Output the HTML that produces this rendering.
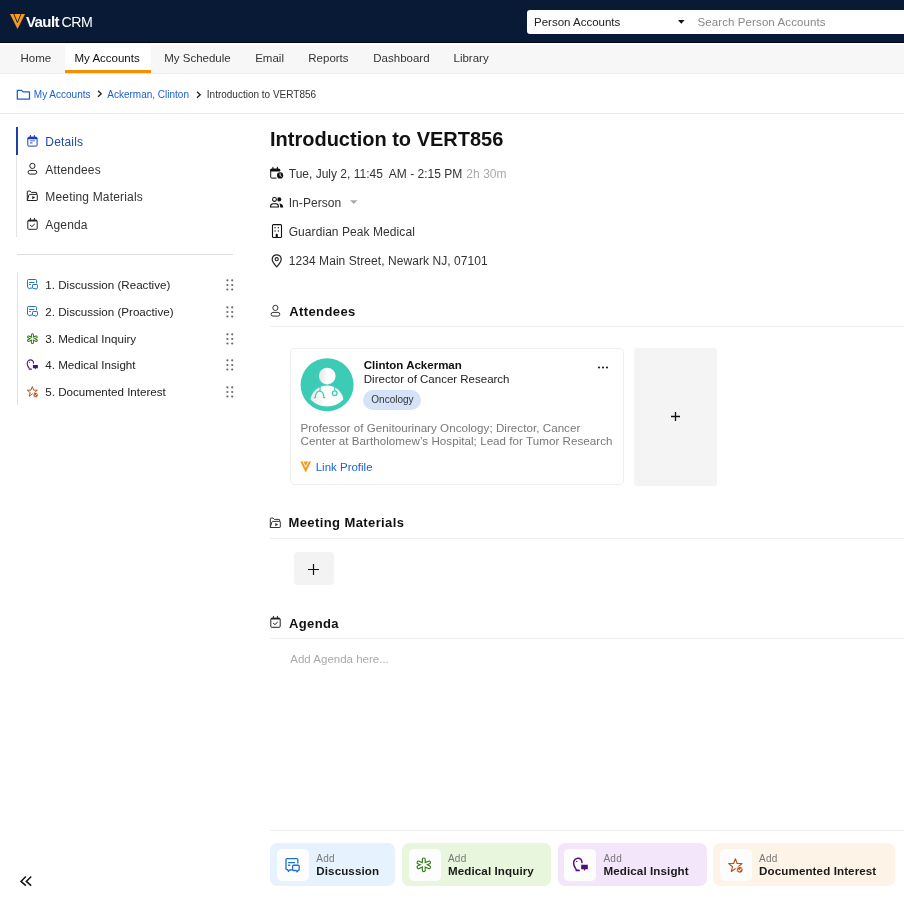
<!DOCTYPE html>
<html><head><meta charset="utf-8">
<style>
*{box-sizing:border-box;margin:0;padding:0}
html,body{width:904px;height:900px;overflow:hidden;background:#fff;font-family:"Liberation Sans",sans-serif;color:#222}
.abs{position:absolute}
svg.abs{overflow:visible}
.t{position:absolute;white-space:nowrap;line-height:1}
#hdr{position:absolute;left:0;top:0;width:904px;height:43px;background:#091a37;border-bottom:1px solid #020617}
#nav{position:absolute;left:0;top:43px;width:904px;height:31px;background:#f7f7f7;border-top:2px solid #fff;border-bottom:1px solid #ececec}
.tab{position:absolute;top:0;height:28px;font-size:11.5px;color:#333}
.tab span{position:absolute;top:7px}
#bc{position:absolute;left:0;top:113px;width:904px;height:1px;background:#ececec}
.side{font-size:12px;color:#333;letter-spacing:0.17px}
.side2{font-size:11.6px;color:#222}
.info{font-size:12px;color:#333;letter-spacing:0.07px}
.sec{font-size:13px;font-weight:bold;color:#111;letter-spacing:0.4px}
.sep{position:absolute;height:1px;background:#eeeeee}
</style></head><body><div id="root" style="position:absolute;left:0;top:0;width:904px;height:900px;will-change:transform;overflow:hidden">

<div id="hdr">
  <svg class="abs" style="left:9px;top:13px" width="17" height="17" viewBox="9 13 17 17">
    <path d="M10 14 L25 14 L17.5 29 Z" fill="#f69b1e"/>
    <path d="M13.8 14 L17.4 22.6 L21 14" fill="none" stroke="#091a37" stroke-width="0.9"/>
  </svg>
  <div class="t" style="left:26px;top:14px;font-size:15px;font-weight:bold;color:#fff;letter-spacing:-0.6px">Vault</div>
  <div class="t" style="left:61.5px;top:14.5px;font-size:14.2px;color:#fff;letter-spacing:-0.5px">CRM</div>
  <div class="abs" style="left:527px;top:9.8px;width:400px;height:24px;background:#fff;border-radius:3px"></div>
  <div class="t" style="left:534px;top:17px;font-size:11.5px;color:#222">Person Accounts</div>
  <svg class="abs" style="left:677.8px;top:20px" width="8" height="5"><path d="M0 0 H6.6 L3.3 3.8Z" fill="#111"/></svg>
  <div class="t" style="left:697.5px;top:17px;font-size:11.5px;color:#888;letter-spacing:0.1px">Search Person Accounts</div>
</div>

<div id="nav">
  <div class="tab" style="left:10px;width:51px"><span style="left:10.5px">Home</span></div>
  <div class="tab" style="left:65px;width:86px;background:#fff;color:#111;border-bottom:3px solid #f78e00"><span style="left:9.5px">My Accounts</span></div>
  <div class="tab" style="left:154.2px;width:86px"><span style="left:10px">My Schedule</span></div>
  <div class="tab" style="left:245.2px;width:86px"><span style="left:10px">Email</span></div>
  <div class="tab" style="left:298.3px;width:86px"><span style="left:10px">Reports</span></div>
  <div class="tab" style="left:363.3px;width:86px"><span style="left:10px">Dashboard</span></div>
  <div class="tab" style="left:443.5px;width:86px"><span style="left:10px">Library</span></div>
</div>

<!-- breadcrumb -->
<svg class="abs" style="left:16px;top:88.5px" width="15" height="12" viewBox="0 0 15 12">
  <path d="M1.3 1.4 H5.6 L7 2.9 H13.5 V10 H1.3 Z" fill="none" stroke="#1a5fd0" stroke-width="1.25" stroke-linejoin="round"/>
</svg>
<div class="t" style="left:33.8px;top:90px;font-size:10px;color:#1a5fd0">My Accounts</div>
<svg class="abs" style="left:96.5px;top:90.4px" width="6" height="7"><path d="M1 0.8 L4.2 3.8 L1 6.8" fill="none" stroke="#222" stroke-width="1.3"/></svg>
<div class="t" style="left:107.3px;top:90px;font-size:10px;color:#1a5fd0">Ackerman, Clinton</div>
<svg class="abs" style="left:195.7px;top:91px" width="6" height="7"><path d="M1 0.8 L4.2 3.8 L1 6.8" fill="none" stroke="#222" stroke-width="1.3"/></svg>
<div class="t" style="left:206.8px;top:90px;font-size:10px;color:#333">Introduction to VERT856</div>
<div id="bc"></div>


<!-- sidebar -->
<div class="abs" style="left:16px;top:127px;width:1px;height:110px;background:#e3e3e3"></div>
<div class="abs" style="left:16px;top:127px;width:2px;height:28px;background:#1f3f9e"></div>
<svg class="abs" style="left:26px;top:135px" width="12.00" height="12.00" viewBox="0 0 12 12"><rect x="1.8" y="2.3" width="9.3" height="8.8" rx="1" fill="none" stroke="#1d3fb4" stroke-width="1"/><path d="M1.8 3.3 Q1.8 1.8 3 1.8 H9.9 Q11.1 1.8 11.1 3.3 V4.3 H1.8 Z" fill="#1d3fb4"/><path d="M4.4 0.4 V2 M8.4 0.4 V2" stroke="#1d3fb4" stroke-width="1" stroke-linecap="round"/><path d="M4.1 5.8 H8.9" stroke="#1d3fb4" stroke-width="1" stroke-opacity="0.75"/><path d="M4.1 7.9 H6.5" stroke="#1d3fb4" stroke-width="1.3" stroke-opacity="0.75"/></svg>
<div class="t side" style="left:45.3px;top:136px;color:#1f4aa6">Details</div>
<svg class="abs" style="left:26px;top:163px" width="12.00" height="12.00" viewBox="0 0 12 12"><circle cx="6.4" cy="2.9" r="2.6" fill="none" stroke="#222" stroke-width="1.0"/><rect x="2.1" y="7.4" width="8.7" height="3.7" rx="1.85" fill="none" stroke="#222" stroke-width="1.0"/></svg>
<div class="t side" style="left:45.3px;top:163.5px">Attendees</div>
<svg class="abs" style="left:26px;top:190px" width="12.00" height="12.00" viewBox="0 0 12 12"><path d="M1.3 10.5 V1.6 Q1.3 1.1 1.8 1.1 H4.2 L5.3 2.4 H10.2 Q10.7 2.4 10.7 2.9 V4.4" fill="none" stroke="#222" stroke-width="1.0" stroke-linejoin="round"/><path d="M1.3 10.5 L2.9 5 Q3.1 4.4 3.7 4.4 H10.8 Q11.3 4.4 11.3 4.9 V10 Q11.3 10.5 10.8 10.5 Z" fill="none" stroke="#222" stroke-width="1.0" stroke-linejoin="round"/><path d="M6.4 6.3 L6.4 8.9 L8.9 7.5 Z" fill="#222" stroke="#222" stroke-width="0.4" stroke-linejoin="round"/></svg>
<div class="t side" style="left:45.3px;top:191px">Meeting Materials</div>
<svg class="abs" style="left:26px;top:218px" width="12.00" height="12.00" viewBox="0 0 12 12"><rect x="1.8" y="2.3" width="9.4" height="9" rx="1" fill="none" stroke="#222" stroke-width="1.0"/><path d="M1.8 3.2 Q1.8 1.8 3 1.8 H10 Q11.2 1.8 11.2 3.2 V3.6 H1.8 Z" fill="#222"/><path d="M4.4 0.3 V2 M8.4 0.3 V2" stroke="#222" stroke-width="1" stroke-linecap="round"/><path d="M4.4 7.3 L5.9 8.6 L8.5 6.2" fill="none" stroke="#222" stroke-width="1" stroke-linecap="round" stroke-linejoin="round"/></svg>
<div class="t side" style="left:45.3px;top:218.5px">Agenda</div>
<div class="abs" style="left:17px;top:254px;width:216px;height:1px;background:#dcdcdc"></div>
<div class="abs" style="left:17px;top:272px;width:1px;height:133px;background:#e3e3e3"></div>
<svg class="abs" style="left:26px;top:279px" width="12.00" height="12.00" viewBox="0 0 12 12"><path d="M10.5 3.8 V1.4 Q10.5 0.5 9.6 0.5 H2.4 Q1.5 0.5 1.5 1.4 V8.1 Q1.5 8.5 1.9 8.6 L2.7 8.9 L3.4 10.1 L4 9.1 H5.6" fill="none" stroke="#1f6fd1" stroke-width="1.0" stroke-linejoin="round" stroke-linecap="round"/><path d="M3.5 3.5 H8 M3.5 5.5 H4.4" stroke="#1f6fd1" stroke-width="1.0" stroke-linecap="round"/><path d="M7.2 5.5 H10.8 Q11.5 5.5 11.5 6.2 V8.8 Q11.5 9.5 10.8 9.5 H10.5 L9.9 10.5 L9.3 9.5 H7.2 Q6.5 9.5 6.5 8.8 V6.2 Q6.5 5.5 7.2 5.5 Z" fill="none" stroke="#1f6fd1" stroke-width="1.0" stroke-linejoin="round"/></svg>
<div class="t side2" style="left:45.3px;top:279.0px">1. Discussion (Reactive)</div>
<svg class="abs" style="left:226px;top:279.0px" width="8" height="12" viewBox="0 0 8 12"><g fill="#666"><circle cx="1.4" cy="1.3" r="1.1"/><circle cx="6.2" cy="1.3" r="1.1"/><circle cx="1.4" cy="6" r="1.1"/><circle cx="6.2" cy="6" r="1.1"/><circle cx="1.4" cy="10.5" r="1.1"/><circle cx="6.2" cy="10.5" r="1.1"/></g></svg>
<svg class="abs" style="left:26px;top:306px" width="12.00" height="12.00" viewBox="0 0 12 12"><path d="M10.5 3.8 V1.4 Q10.5 0.5 9.6 0.5 H2.4 Q1.5 0.5 1.5 1.4 V8.1 Q1.5 8.5 1.9 8.6 L2.7 8.9 L3.4 10.1 L4 9.1 H5.6" fill="none" stroke="#1f6fd1" stroke-width="1.0" stroke-linejoin="round" stroke-linecap="round"/><path d="M3.5 3.5 H8 M3.5 5.5 H4.4" stroke="#1f6fd1" stroke-width="1.0" stroke-linecap="round"/><path d="M7.2 5.5 H10.8 Q11.5 5.5 11.5 6.2 V8.8 Q11.5 9.5 10.8 9.5 H10.5 L9.9 10.5 L9.3 9.5 H7.2 Q6.5 9.5 6.5 8.8 V6.2 Q6.5 5.5 7.2 5.5 Z" fill="none" stroke="#1f6fd1" stroke-width="1.0" stroke-linejoin="round"/></svg>
<div class="t side2" style="left:45.3px;top:305.7px">2. Discussion (Proactive)</div>
<svg class="abs" style="left:226px;top:305.7px" width="8" height="12" viewBox="0 0 8 12"><g fill="#666"><circle cx="1.4" cy="1.3" r="1.1"/><circle cx="6.2" cy="1.3" r="1.1"/><circle cx="1.4" cy="6" r="1.1"/><circle cx="6.2" cy="6" r="1.1"/><circle cx="1.4" cy="10.5" r="1.1"/><circle cx="6.2" cy="10.5" r="1.1"/></g></svg>
<svg class="abs" style="left:26px;top:333px" width="12.00" height="12.00" viewBox="0 0 12 12"><path d="M6.4 1.8000000000000003 V9.6 M2.56 3.99 L10.24 7.41 M2.56 7.41 L10.24 3.99" stroke="#2a7a12" stroke-width="3.0" stroke-linecap="round"/><path d="M6.4 1.8000000000000003 V9.6 M2.56 3.99 L10.24 7.41 M2.56 7.41 L10.24 3.99" stroke="#fff" stroke-width="1.00" stroke-linecap="round"/></svg>
<div class="t side2" style="left:45.3px;top:332.6px">3. Medical Inquiry</div>
<svg class="abs" style="left:226px;top:332.6px" width="8" height="12" viewBox="0 0 8 12"><g fill="#666"><circle cx="1.4" cy="1.3" r="1.1"/><circle cx="6.2" cy="1.3" r="1.1"/><circle cx="1.4" cy="6" r="1.1"/><circle cx="6.2" cy="6" r="1.1"/><circle cx="1.4" cy="10.5" r="1.1"/><circle cx="6.2" cy="10.5" r="1.1"/></g></svg>
<svg class="abs" style="left:26px;top:359px" width="12.00" height="12.00" viewBox="0 0 12 12"><path d="M3.1 9.3 C2.6 8.2 1.2 7 1.2 4.6 C1.2 2.5 2.8 0.9 4.5 0.9 C6.3 0.9 7.7 2.3 7.5 4.2" fill="none" stroke="#520a85" stroke-width="1.1" stroke-linecap="round"/><path d="M3.3 10.1 H5.3" stroke="#520a85" stroke-width="1.3" stroke-linecap="round"/><circle cx="3.6" cy="3.3" r="0.55" fill="#520a85"/><path d="M6.9 5.9 H11.9 V9.2 H10 L9.4 10.5 L8.8 9.2 H6.9 Z" fill="#520a85"/></svg>
<div class="t side2" style="left:45.3px;top:359.2px">4. Medical Insight</div>
<svg class="abs" style="left:226px;top:359.2px" width="8" height="12" viewBox="0 0 8 12"><g fill="#666"><circle cx="1.4" cy="1.3" r="1.1"/><circle cx="6.2" cy="1.3" r="1.1"/><circle cx="1.4" cy="6" r="1.1"/><circle cx="6.2" cy="6" r="1.1"/><circle cx="1.4" cy="10.5" r="1.1"/><circle cx="6.2" cy="10.5" r="1.1"/></g></svg>
<svg class="abs" style="left:26px;top:386px" width="12.00" height="12.00" viewBox="0 0 12 12"><path d="M8.42 6.59 L11.34 4.26 L7.61 4.1 L6.3 0.6 L4.99 4.1 L1.26 4.26 L4.18 6.59 L3.18 10.19 L6.3 8.13" fill="none" stroke="#b5541b" stroke-width="1.0" stroke-linejoin="round" stroke-linecap="round"/><circle cx="9.6" cy="8.9" r="2.5" fill="#b5541b" stroke="#fff" stroke-width="0.6"/><path d="M8.5 8.9 L9.3 9.7 L10.7 8.2" fill="none" stroke="#fff" stroke-width="0.8" stroke-linecap="round" stroke-linejoin="round"/></svg>
<div class="t side2" style="left:45.3px;top:385.8px">5. Documented Interest</div>
<svg class="abs" style="left:226px;top:385.8px" width="8" height="12" viewBox="0 0 8 12"><g fill="#666"><circle cx="1.4" cy="1.3" r="1.1"/><circle cx="6.2" cy="1.3" r="1.1"/><circle cx="1.4" cy="6" r="1.1"/><circle cx="6.2" cy="6" r="1.1"/><circle cx="1.4" cy="10.5" r="1.1"/><circle cx="6.2" cy="10.5" r="1.1"/></g></svg>
<svg class="abs" style="left:18px;top:874px" width="16" height="14" viewBox="0 0 16 14"><path d="M7.9 2.5 L3 7.4 L7.9 11.6 M13.2 2.5 L8.3 7.4 L13.2 11.6" fill="none" stroke="#111" stroke-width="1.5"/></svg>
<!-- main -->
<div class="t" style="left:270px;top:129px;font-size:20px;font-weight:bold;color:#111">Introduction to VERT856</div>
<svg class="abs" style="left:266px;top:162px" width="24" height="22" viewBox="0 0 24 22">
  <path d="M10.6 16.1 H5.8 Q4.7 16.1 4.7 15 V8.2 Q4.7 7 5.9 7 H12.7 Q13.9 7 13.9 8.2 V9 H4.7" fill="none" stroke="#111" stroke-width="1"/>
  <rect x="4.2" y="7" width="9.7" height="2" rx="0.6" fill="#111"/>
  <path d="M6.9 5.2 V7.5 M11.4 5.2 V7.5" stroke="#111" stroke-width="1.1" stroke-linecap="round"/>
  <circle cx="14.1" cy="13.4" r="3.1" fill="#111"/>
  <path d="M14.1 11.7 V13.6 L15.3 14.3" fill="none" stroke="#fff" stroke-width="0.9" stroke-linecap="round" stroke-linejoin="round"/>
</svg>
<div class="t info" style="left:288.8px;top:168px;letter-spacing:0">Tue, July 2, 11:45&nbsp; AM - 2:15 PM</div><div class="t info" style="left:466.3px;top:168px;color:#aaa;letter-spacing:0.05px">2h 30m</div>
<svg class="abs" style="left:266px;top:192px" width="24" height="20" viewBox="0 0 24 20">
  <circle cx="13.2" cy="7.4" r="2.1" fill="#111"/>
  <circle cx="8.5" cy="7.4" r="2.9" fill="#fff"/>
  <circle cx="8.5" cy="7.4" r="1.95" fill="none" stroke="#111" stroke-width="1.05"/>
  <path d="M13.3 11.4 C15.6 11.5 17.3 12.9 17.3 15.5 H14.2 C14.2 13.6 13.9 12.3 13.3 11.4 Z" fill="#111"/>
  <path d="M4.5 15 C4.5 12.6 5.5 11.8 7 11.8 H10 C11.5 11.8 12.5 12.6 12.5 15 Z" fill="none" stroke="#111" stroke-width="1.05" stroke-linejoin="round"/>
</svg>
<div class="t info" style="left:288.7px;top:197px">In-Person</div>
<svg class="abs" style="left:349.5px;top:199.5px" width="8" height="5"><path d="M0 0.2 H7.5 L3.75 4Z" fill="#aaa"/></svg>
<svg class="abs" style="left:271px;top:223px" width="12" height="16" viewBox="0 0 12 16">
  <rect x="1.5" y="1.6" width="9" height="12.9" rx="1" fill="none" stroke="#111" stroke-width="1.1"/>
  <g fill="#111"><rect x="3.5" y="4.1" width="1.2" height="1.2"/><rect x="6.8" y="4.1" width="1.2" height="1.2"/><rect x="3.5" y="7.4" width="1.2" height="1.2"/><rect x="6.8" y="7.4" width="1.2" height="1.2"/></g>
  <path d="M4.7 14.5 V11.7 Q4.7 10.7 5.75 10.7 Q6.8 10.7 6.8 11.7 V14.5 Z" fill="#111"/>
</svg>
<div class="t info" style="left:288.7px;top:226px">Guardian Peak Medical</div>
<svg class="abs" style="left:271px;top:254px" width="12" height="14" viewBox="0 0 12 14">
  <path d="M5.7 12.8 C3.5 10.5 1.2 7.8 1.2 5.2 C1.2 2.6 3.2 0.8 5.7 0.8 C8.2 0.8 10.2 2.6 10.2 5.2 C10.2 7.8 7.9 10.5 5.7 12.8 Z" fill="none" stroke="#222" stroke-width="1.2"/>
  <circle cx="5.7" cy="5.2" r="1.6" fill="none" stroke="#222" stroke-width="1.1"/>
</svg>
<div class="t info" style="left:288.7px;top:255px">1234 Main Street, Newark NJ, 07101</div>

<svg class="abs" style="left:269px;top:305px" width="12.00" height="12.00" viewBox="0 0 12 12"><circle cx="6.4" cy="2.9" r="2.6" fill="none" stroke="#333" stroke-width="1.0"/><rect x="2.1" y="7.4" width="8.7" height="3.7" rx="1.85" fill="none" stroke="#333" stroke-width="1.0"/></svg>
<div class="t sec" style="left:289.2px;top:305px">Attendees</div>
<div class="sep" style="left:270px;top:326px;width:634px"></div>

<div class="abs" style="left:290px;top:347.6px;width:333.5px;height:137.8px;border:1px solid #efefef;border-radius:4px"></div>
<svg class="abs" style="left:299.5px;top:357.5px" width="54" height="54" viewBox="0 0 54 54">
  <defs>
    <linearGradient id="gw" x1="0" x2="1"><stop offset="0" stop-color="#e6e6e6"/><stop offset="0.55" stop-color="#ffffff"/><stop offset="1" stop-color="#ffffff"/></linearGradient>
    <linearGradient id="gb" x1="0" x2="1"><stop offset="0" stop-color="#ececec"/><stop offset="0.5" stop-color="#ffffff"/><stop offset="1" stop-color="#fafafa"/></linearGradient>
  </defs>
  <circle cx="27.1" cy="26.8" r="26.5" fill="#3ccbb5"/>
  <circle cx="27.2" cy="18.1" r="8.4" fill="url(#gw)"/>
  <path d="M10.4 41.3 C12 33 19 27.5 27 27.5 C35 27.5 42 33 43.4 41.3 C39 46.5 33 48.5 27 48.5 C21 48.5 15 46.5 10.4 41.3 Z" fill="url(#gb)"/>
  <path d="M20 27 V33" stroke="#3ccbb5" stroke-width="1.2"/>
  <path d="M14.4 39.6 H15.4 C15.2 35.5 17.3 33 19.6 33 C21.9 33 24 35.5 23.8 39.6 H24.8" fill="none" stroke="#3ccbb5" stroke-width="1.25" stroke-linecap="round" stroke-linejoin="round"/>
  <path d="M34.7 27 V32.6" stroke="#3ccbb5" stroke-width="1.2"/>
  <circle cx="34.7" cy="35.2" r="2.3" fill="none" stroke="#3ccbb5" stroke-width="1.25"/>
</svg>
<div class="t" style="left:363.8px;top:360px;font-size:11.5px;font-weight:bold;color:#111">Clinton Ackerman</div>
<div class="t" style="left:363.8px;top:374px;font-size:11.5px;color:#222">Director of Cancer Research</div>
<div class="abs" style="left:363.3px;top:390px;width:57.5px;height:20px;border-radius:10px;background:#d5e3f8"></div>
<div class="t" style="left:371.3px;top:395px;font-size:10px;color:#333">Oncology</div>
<svg class="abs" style="left:597px;top:365px" width="12" height="5"><g fill="#222"><circle cx="2" cy="2.5" r="1.1"/><circle cx="6" cy="2.5" r="1.1"/><circle cx="10" cy="2.5" r="1.1"/></g></svg>
<div class="t" style="left:300.5px;top:421px;font-size:11.6px;color:#777;line-height:13.1px;letter-spacing:0.04px">Professor of Genitourinary Oncology; Director, Cancer<br>Center at Bartholomew’s Hospital; Lead for Tumor Research</div>
<svg class="abs" style="left:300px;top:460.5px" width="12" height="12" viewBox="0 0 12 12">
  <path d="M0.3 0.5 H11.2 L5.75 11.5 Z" fill="#f39a1e"/>
  <path d="M3 0.5 L5.7 6.3 L8.5 0.5" fill="none" stroke="#fff" stroke-width="0.9"/>
</svg>
<div class="t" style="left:315.7px;top:462px;font-size:11.5px;color:#1a62d0">Link Profile</div>
<div class="abs" style="left:633.7px;top:348px;width:83.5px;height:137.5px;background:#f4f4f4;border-radius:3px"></div>
<svg class="abs" style="left:671px;top:412px" width="9" height="9"><path d="M4.5 0 V9 M0 4.5 H9" stroke="#111" stroke-width="1.3"/></svg>

<svg class="abs" style="left:268.5px;top:516.5px" width="12.00" height="12.00" viewBox="0 0 12 12"><path d="M1.3 10.5 V1.6 Q1.3 1.1 1.8 1.1 H4.2 L5.3 2.4 H10.2 Q10.7 2.4 10.7 2.9 V4.4" fill="none" stroke="#333" stroke-width="1.0" stroke-linejoin="round"/><path d="M1.3 10.5 L2.9 5 Q3.1 4.4 3.7 4.4 H10.8 Q11.3 4.4 11.3 4.9 V10 Q11.3 10.5 10.8 10.5 Z" fill="none" stroke="#333" stroke-width="1.0" stroke-linejoin="round"/><path d="M6.4 6.3 L6.4 8.9 L8.9 7.5 Z" fill="#333" stroke="#333" stroke-width="0.4" stroke-linejoin="round"/></svg>
<div class="t sec" style="left:288.5px;top:516px">Meeting Materials</div>
<div class="sep" style="left:270px;top:538px;width:634px"></div>
<div class="abs" style="left:293.5px;top:552.4px;width:40px;height:33px;background:#f3f3f3;border-radius:4px"></div>
<svg class="abs" style="left:308px;top:563.5px" width="11" height="11"><path d="M5.5 0 V11 M0 5.5 H11" stroke="#111" stroke-width="1.2"/></svg>

<svg class="abs" style="left:268.8px;top:616px" width="12.00" height="12.00" viewBox="0 0 12 12"><rect x="1.8" y="2.3" width="9.4" height="9" rx="1" fill="none" stroke="#222" stroke-width="1.0"/><path d="M1.8 3.2 Q1.8 1.8 3 1.8 H10 Q11.2 1.8 11.2 3.2 V3.6 H1.8 Z" fill="#222"/><path d="M4.4 0.3 V2 M8.4 0.3 V2" stroke="#222" stroke-width="1" stroke-linecap="round"/><path d="M4.4 7.3 L5.9 8.6 L8.5 6.2" fill="none" stroke="#222" stroke-width="1" stroke-linecap="round" stroke-linejoin="round"/></svg>
<div class="t sec" style="left:288.9px;top:617px">Agenda</div>
<div class="sep" style="left:270px;top:638px;width:634px"></div>
<div class="t" style="left:290.3px;top:654px;font-size:11.5px;color:#aaa">Add Agenda here...</div>

<div class="sep" style="left:270px;top:830px;width:634px"></div>
<div class="abs" style="left:270.3px;top:843.3px;width:124.4px;height:43px;background:#e6f2fd;border-radius:7px"><div class="abs" style="left:6.5px;top:5.7px;width:32px;height:32px;background:#fdfdfd;border-radius:5px"></div><svg class="abs" style="left:13.699999999999989px;top:14.300000000000068px" width="15.84" height="15.84" viewBox="0 0 12 12"><path d="M10.5 3.8 V1.4 Q10.5 0.5 9.6 0.5 H2.4 Q1.5 0.5 1.5 1.4 V8.1 Q1.5 8.5 1.9 8.6 L2.7 8.9 L3.4 10.1 L4 9.1 H5.6" fill="none" stroke="#1f6fd1" stroke-width="1.0" stroke-linejoin="round" stroke-linecap="round"/><path d="M3.5 3.5 H8 M3.5 5.5 H4.4" stroke="#1f6fd1" stroke-width="1.0" stroke-linecap="round"/><path d="M7.2 5.5 H10.8 Q11.5 5.5 11.5 6.2 V8.8 Q11.5 9.5 10.8 9.5 H10.5 L9.9 10.5 L9.3 9.5 H7.2 Q6.5 9.5 6.5 8.8 V6.2 Q6.5 5.5 7.2 5.5 Z" fill="none" stroke="#1f6fd1" stroke-width="1.0" stroke-linejoin="round"/></svg><div class="t" style="left:46px;top:10.5px;font-size:10px;color:#777;letter-spacing:0.2px">Add</div><div class="t" style="left:46px;top:21.5px;font-size:11.6px;font-weight:bold;color:#1a1a1a;letter-spacing:0.1px">Discussion</div></div>
<div class="abs" style="left:402px;top:843.3px;width:148.7px;height:43px;background:#e8f6de;border-radius:7px"><div class="abs" style="left:6.5px;top:5.7px;width:32px;height:32px;background:#fdfdfd;border-radius:5px"></div><svg class="abs" style="left:13.199999999999989px;top:13.900000000000091px" width="16.44" height="16.44" viewBox="0 0 12 12"><path d="M6.4 1.8000000000000003 V9.6 M2.56 3.99 L10.24 7.41 M2.56 7.41 L10.24 3.99" stroke="#2a7a12" stroke-width="2.9" stroke-linecap="round"/><path d="M6.4 1.8000000000000003 V9.6 M2.56 3.99 L10.24 7.41 M2.56 7.41 L10.24 3.99" stroke="#fff" stroke-width="1.26" stroke-linecap="round"/></svg><div class="t" style="left:46px;top:10.5px;font-size:10px;color:#777;letter-spacing:0.2px">Add</div><div class="t" style="left:46px;top:21.5px;font-size:11.6px;font-weight:bold;color:#1a1a1a;letter-spacing:0.1px">Medical Inquiry</div></div>
<div class="abs" style="left:557.5px;top:843.3px;width:149.1px;height:43px;background:#f3e6fb;border-radius:7px"><div class="abs" style="left:6.5px;top:5.7px;width:32px;height:32px;background:#fdfdfd;border-radius:5px"></div><svg class="abs" style="left:14.049999999999955px;top:13.300000000000068px" width="15.96" height="15.96" viewBox="0 0 12 12"><path d="M3.1 9.3 C2.6 8.2 1.2 7 1.2 4.6 C1.2 2.5 2.8 0.9 4.5 0.9 C6.3 0.9 7.7 2.3 7.5 4.2" fill="none" stroke="#520a85" stroke-width="1.1" stroke-linecap="round"/><path d="M3.3 10.1 H5.3" stroke="#520a85" stroke-width="1.3" stroke-linecap="round"/><circle cx="3.6" cy="3.3" r="0.55" fill="#520a85"/><path d="M6.9 5.9 H11.9 V9.2 H10 L9.4 10.5 L8.8 9.2 H6.9 Z" fill="#520a85"/></svg><div class="t" style="left:46px;top:10.5px;font-size:10px;color:#777;letter-spacing:0.2px">Add</div><div class="t" style="left:46px;top:21.5px;font-size:11.6px;font-weight:bold;color:#1a1a1a;letter-spacing:0.1px">Medical Insight</div></div>
<div class="abs" style="left:713.1px;top:843.3px;width:182.1px;height:43px;background:#fdf3e7;border-radius:7px"><div class="abs" style="left:6.5px;top:5.7px;width:32px;height:32px;background:#fdfdfd;border-radius:5px"></div><svg class="abs" style="left:13.899999999999977px;top:14.300000000000068px" width="15.96" height="15.96" viewBox="0 0 12 12"><path d="M8.42 6.59 L11.34 4.26 L7.61 4.1 L6.3 0.6 L4.99 4.1 L1.26 4.26 L4.18 6.59 L3.18 10.19 L6.3 8.13" fill="none" stroke="#b5541b" stroke-width="0.85" stroke-linejoin="round" stroke-linecap="round"/><circle cx="9.6" cy="8.9" r="2.5" fill="#b5541b" stroke="#fff" stroke-width="0.6"/><path d="M8.5 8.9 L9.3 9.7 L10.7 8.2" fill="none" stroke="#fff" stroke-width="0.8" stroke-linecap="round" stroke-linejoin="round"/></svg><div class="t" style="left:46px;top:10.5px;font-size:10px;color:#777;letter-spacing:0.2px">Add</div><div class="t" style="left:46px;top:21.5px;font-size:11.6px;font-weight:bold;color:#1a1a1a;letter-spacing:0.1px">Documented Interest</div></div>

</div></body></html>
